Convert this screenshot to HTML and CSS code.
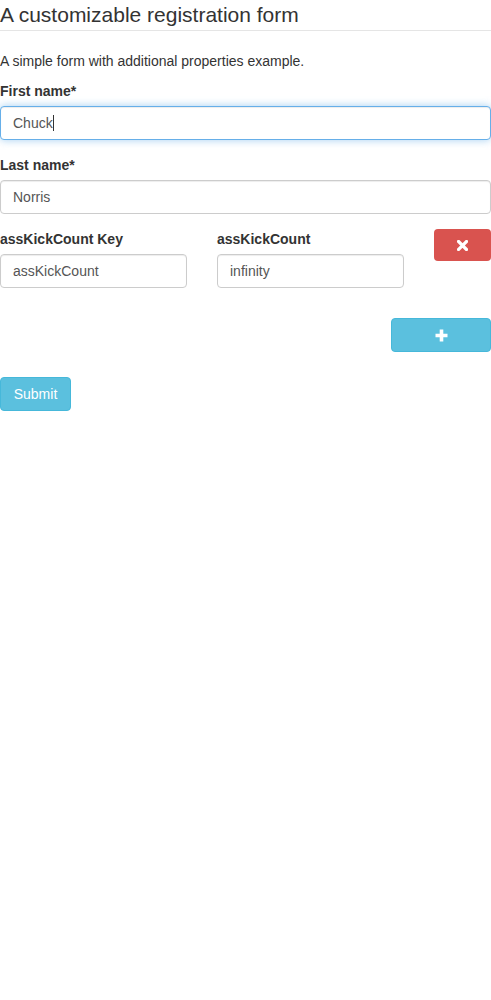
FILE: index.html
```html
<!DOCTYPE html>
<html>
<head>
<meta charset="utf-8">
<link rel="stylesheet" href="styles.css">
</head>
<body>
<form class="form">
  <fieldset class="fieldset">
    <legend class="legend">A customizable registration form</legend>
    <p class="description">A simple form with additional properties example.</p>
    <div class="form-group">
      <label class="label">First name*</label>
      <div class="input focused"><span class="value">Chuck</span><span class="caret"></span></div>
    </div>
    <div class="form-group">
      <label class="label">Last name*</label>
      <div class="input"><span class="value">Norris</span></div>
    </div>
    <div class="additional">
      <div class="col">
        <label class="label">assKickCount Key</label>
        <div class="input"><span class="value">assKickCount</span></div>
      </div>
      <div class="col">
        <label class="label">assKickCount</label>
        <div class="input"><span class="value">infinity</span></div>
      </div>
      <div class="col-btn">
        <button type="button" class="btn btn-danger btn-remove">
          <svg width="11" height="11" viewBox="0 0 11 11"><path d="M1.5 1.5 L9.5 9.5 M9.5 1.5 L1.5 9.5" stroke="#fff" stroke-width="3.2" stroke-linecap="square" fill="none"/></svg>
        </button>
      </div>
    </div>
    <div class="add-row">
      <button type="button" class="btn btn-info btn-add">
        <svg width="13" height="13" viewBox="0 0 13 13"><path d="M6.5 0.5 V12.5 M0.5 6.5 H12.5" stroke="#fff" stroke-width="3.6" fill="none"/></svg>
      </button>
    </div>
  </fieldset>
  <button type="submit" class="btn btn-info btn-submit">Submit</button>
</form>
</body>
</html>
```
FILE: styles.css
```css
* { box-sizing: border-box; }
html, body { margin: 0; padding: 0; background: #fff; }
body {
  font-family: "Liberation Sans", Arial, sans-serif;
  font-size: 14px;
  line-height: 20px;
  color: #333;
  width: 491px;
}
.form { margin: 0; }
.fieldset { border: 0; margin: 0; padding: 0; min-width: 0; }
.legend {
  display: block;
  width: 100%;
  padding: 0;
  margin: 0 0 20px;
  font-size: 21px;
  line-height: 30px;
  color: #333;
  border-bottom: 1px solid #e5e5e5;
}
.description { margin: 0 0 10px; }
.form-group { margin-bottom: 15px; }
.label {
  display: block;
  font-weight: bold;
  margin-bottom: 5px;
  height: 20px;
}
.input {
  display: flex;
  align-items: center;
  height: 34px;
  padding: 6px 12px;
  border: 1px solid #ccc;
  border-radius: 4px;
  box-shadow: inset 0 1px 1px rgba(0,0,0,.075);
  color: #555;
  background: #fff;
}
.input.focused {
  border-color: #66afe9;
  box-shadow: inset 0 1px 1px rgba(0,0,0,.075), 0 0 8px rgba(102,175,233,.6);
}
.caret {
  display: inline-block;
  width: 1px;
  height: 16px;
  background: #333;
  margin-left: 0;
}
.additional {
  display: grid;
  grid-template-columns: 187px 187px 57px;
  column-gap: 30px;
  margin-bottom: 15px;
  align-items: start;
}
.col { margin-bottom: 15px; }
.btn {
  display: flex;
  align-items: center;
  justify-content: center;
  font-family: "Liberation Sans", Arial, sans-serif;
  font-size: 14px;
  line-height: 20px;
  padding: 6px 12px;
  border: 1px solid transparent;
  border-radius: 4px;
  color: #fff;
  cursor: pointer;
}
.btn-danger { background: #d9534f; border-color: #d43f3a; }
.btn-info { background: #5bc0de; border-color: #46b8da; }
.btn-remove { width: 57px; height: 32px; border: 0; }
.add-row {
  display: flex;
  justify-content: flex-end;
  margin-bottom: 25px;
}
.btn-add { width: 100px; height: 34px; }
.btn-submit { height: 34px; width: 71px; }
```
